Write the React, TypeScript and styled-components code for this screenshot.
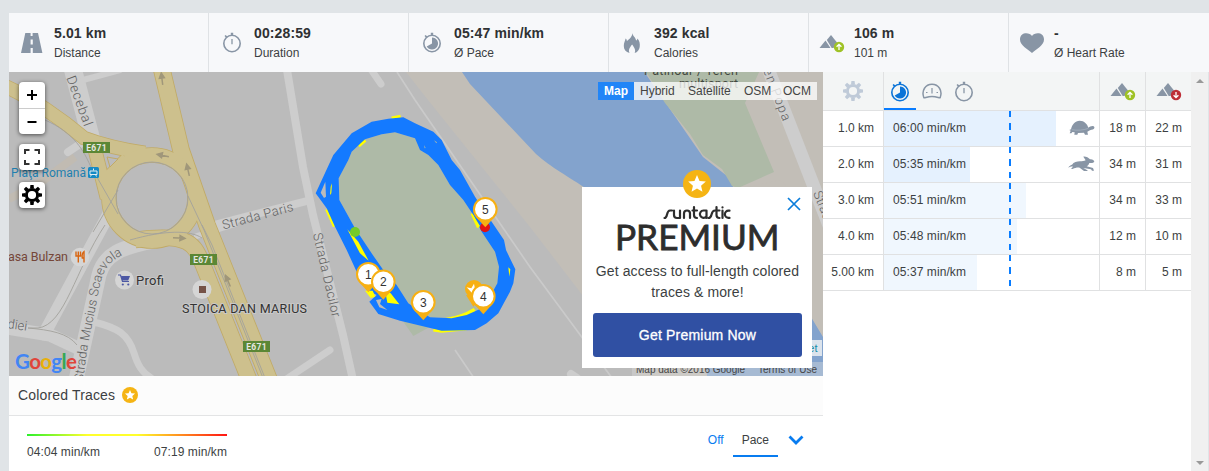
import React from "react"
import styled, { createGlobalStyle } from "styled-components"

const GlobalStyle = createGlobalStyle`
  body {
    margin: 0;
    overflow: hidden;
    background: #e0e4e7;
    color: #3c3f42;
    font-family: "Liberation Sans", Arial, sans-serif;
    font-size: 12px;
  }
  * {
    box-sizing: border-box;
  }
  svg {
    display: block;
    flex-shrink: 0;
  }
`

const Page = styled.div`
  display: flex;
  flex-direction: column;
  width: 1209px;
  height: 471px;
  padding: 13px 0 0 9px;
`
const Stats = styled.div`
  display: flex;
  height: 59px;
  background: #f7f8fa;
`
const Stat = styled.div`
  display: flex;
  width: 200px;
  border-right: 1px solid #dfe2e5;
  &:last-child {
    border-right: none;
  }
`
const StatIcon = styled.div`
  display: flex;
  align-items: center;
  justify-content: center;
  width: 45px;
`
const StatText = styled.div`
  display: flex;
  flex-direction: column;
  padding-top: 10px;
  line-height: 20px;
`
const StatValue = styled.div`
  font-size: 14px;
  font-weight: bold;
  letter-spacing: 0.12px;
  color: #2f3133;
`
const Main = styled.div`
  display: flex;
  flex: 1;
`
const Left = styled.div`
  width: 814px;
  background: #fff;
`

const MapBox = styled.div`
  position: relative;
  height: 304px;
  overflow: hidden;
`
const Controls = styled.div`
  position: absolute;
  left: 10px;
  top: 10px;
  display: flex;
  flex-direction: column;
`
const Control = styled.div<{ $gap?: number }>`
  width: 26px;
  margin-bottom: ${(p) => p.$gap || 0}px;
  border-radius: 4px;
  background: #fff;
  box-shadow: 0 1px 4px rgba(0, 0, 0, 0.6);
`
const ControlButton = styled.div`
  display: flex;
  align-items: center;
  justify-content: center;
  height: 26px;
  & + & {
    border-top: 1px solid #ccc;
  }
`
const MapTypes = styled.div`
  position: absolute;
  right: 6px;
  top: 10px;
  display: flex;
  height: 18px;
  line-height: 18px;
  background: rgba(255, 255, 255, 0.75);
`
const MapType = styled.div<{ $width: number; $active?: boolean }>`
  width: ${(p) => p.$width}px;
  padding-left: 6px;
  color: ${(p) => (p.$active ? "#fff" : "#444")};
  background: ${(p) => (p.$active ? "#2185f7" : "transparent")};
  font-weight: ${(p) => (p.$active ? "bold" : "normal")};
`
const Promo = styled.div`
  position: absolute;
  left: 573px;
  top: 115px;
  display: flex;
  flex-direction: column;
  align-items: center;
  width: 230px;
  height: 181px;
  padding: 17px 10px 0 11px;
  background: #fff;
`
const PromoStar = styled.div`
  position: absolute;
  left: 101px;
  top: -17px;
`
const Close = styled.div`
  position: absolute;
  right: 11px;
  top: 10px;
`
const PromoText = styled.div`
  height: 42px;
  margin-bottom: 10px;
  font-size: 14px;
  line-height: 21px;
  letter-spacing: 0.1px;
  text-align: center;
  white-space: nowrap;
`
const PromoButton = styled.div`
  width: 209px;
  height: 44px;
  border-radius: 3px;
  background: #3050a3;
  color: #fff;
  font-size: 14px;
  line-height: 44px;
  letter-spacing: 0.2px;
  text-align: center;
  -webkit-text-stroke: 0.3px #fff;
`
const TracesHeader = styled.div`
  display: flex;
  align-items: center;
  gap: 7px;
  height: 40px;
  padding: 0 0 1px 9px;
  border-bottom: 1px solid #e3e4e5;
  background: #fcfcfc;
  font-size: 14px;
  letter-spacing: 0.16px;
`
const Traces = styled.div`
  display: flex;
  justify-content: space-between;
  height: 55px;
  padding: 0 19px 0 18px;
`
const Legend = styled.div`
  width: 200px;
  padding-top: 18px;
`
const LegendBar = styled.div`
  height: 2px;
  background: linear-gradient(90deg, #2cf02c, #ffff2c 30%, #ffff2c 55%, #ff1414);
`
const LegendLabels = styled.div`
  display: flex;
  justify-content: space-between;
  padding-top: 9px;
  line-height: 14px;
  letter-spacing: 0.08px;
`
const TraceTabs = styled.div`
  display: flex;
  padding-top: 7px;
`
const TraceTab = styled.div<{ $active?: boolean }>`
  height: 34px;
  padding: 0 9px;
  line-height: 34px;
  color: ${(p) => (p.$active ? "inherit" : "#087cf0")};
  border-bottom: ${(p) => (p.$active ? "2px solid #087cf0" : "none")};
`
const Chevron = styled.div`
  display: flex;
  align-items: center;
  height: 34px;
  padding-left: 10px;
`

const Splits = styled.div`
  width: 368px;
  background: #fff;
`
const Row = styled.div<{ $head?: boolean }>`
  display: grid;
  grid-template-columns: 61px 216px 46px 45px;
  height: ${(p) => (p.$head ? 39 : 36)}px;
  border-bottom: 1px solid #e0e1e2;
  background: ${(p) => (p.$head ? "#f3f5f5" : "#fff")};
`
const Cell = styled.div`
  display: flex;
  align-items: center;
  justify-content: flex-end;
  padding: 0 9px 2px 0;
  border-right: 1px solid #e0e1e2;
  white-space: nowrap;
  &:last-child {
    border-right: none;
  }
`
const IconCell = styled(Cell)`
  justify-content: center;
  padding: 0;
`
const Tabs = styled.div`
  display: flex;
  border-right: 1px solid #e0e1e2;
`
const Tab = styled.div<{ $active?: boolean }>`
  display: flex;
  align-items: center;
  justify-content: center;
  width: 32px;
  padding-top: 2px;
  border-bottom: 2px solid ${(p) => (p.$active ? "#087cff" : "transparent")};
`
const PaceCell = styled.div`
  position: relative;
  display: flex;
  align-items: center;
  justify-content: space-between;
  padding: 0 4px 2px 9px;
  border-right: 1px solid #e0e1e2;
`
const PaceBar = styled.div<{ $strong?: boolean }>`
  position: absolute;
  left: 0;
  top: 0;
  bottom: 0;
  background: ${(p) => (p.$strong ? "#e5f1fe" : "#f0f7fe")};
`
const PaceText = styled.div`
  position: relative;
  letter-spacing: 0.08px;
`
const Animal = styled.div`
  position: relative;
`
const Average = styled.div`
  position: absolute;
  left: 125px;
  top: 0;
  bottom: 0;
  width: 2px;
  background: repeating-linear-gradient(#087cff 0 6.4px, transparent 6.4px 12.4px);
`
const Scrollbar = styled.div`
  display: flex;
  flex-direction: column;
  justify-content: space-between;
  align-items: center;
  width: 18px;
  padding: 6px 0 5px;
  border-right: 1px solid #e0e4e7;
  background: #f0f0f0;
`

const GREY = "#8895a5"

const RoadIcon = () => (
  <svg width="22" height="20" viewBox="0 0 22 20">
    <path d="M4.3 0H9.6V3H11.6V0H17L21.4 20H11.8V15H9.6V20H0z" fill={GREY} />
    <path d="M9.6 6.5h2.2v5H9.6z" fill="#f7f8fa" />
  </svg>
)

const Stopwatch = ({ pie, color = GREY }: { pie?: boolean; color?: string }) => (
  <svg width="20" height="21" viewBox="0 0 20 21" fill="none" stroke={color}>
    <circle cx="10" cy="11.5" r="8.2" strokeWidth="1.6" />
    <path d="M10 1V3M8.8 1.6h2.4M3.1 3.5L5 5.4" strokeWidth="1.7" />
    {pie ? (
      <path d="M10 5.4V11.5L4.7 14.6A6.1 6.1 0 1 0 10 5.4z" fill={color} stroke="none" />
    ) : (
      <path d="M10 7V12.2" strokeWidth="1.3" />
    )}
  </svg>
)

const Gauge = () => (
  <svg width="20" height="16" viewBox="0 0 20 16" fill="none" stroke={GREY} strokeWidth="1.5">
    <path d="M1.800 14.600C-.8 7.500 3.500 1.200 10 1.200s10.800 6.300 8.200 13.400c-.8.6-3-1-8.200-1s-7.400 1.600-8.200 1z" />
    <path d="M10 5V10.500M4 9.500h1.500M14.500 9.500H16" strokeWidth="1.200" />
  </svg>
)

const Flame = () => (
  <svg width="18" height="20" viewBox="0 0 18 20">
    <path
      d="M9.400 0c.2 3 3.400 4.500 3.700 7.600.8-.4 1.300-1.200 1.300-2C16.500 8 17.200 10.600 16.700 14c-.4 3-2.300 5.200-5 6 1.300-3.500-.4-5.500-2.600-8.600-2.300 3-4.200 5.200-2.500 8.600C2.800 19 .8 16.500.8 13c0-3.500 1.300-5 1.800-7.500.9.6 1.200 1.500 1.300 2.600C6.700 6 9.500 3 9.400 0z"
      fill={GREY}
    />
  </svg>
)

const Heart = () => (
  <svg width="24" height="20" viewBox="0 0 24 20">
    <path
      d="M12 2.900C14.500-1 24-1.300 24 6.500c0 6-7.500 9.500-12 13.500C7.500 16 0 12.500 0 6.500 0-1.300 9.500-1 12 2.900z"
      fill={GREY}
    />
  </svg>
)

const Mountain = ({ down }: { down?: boolean }) => (
  <svg width="26" height="20" viewBox="0 -1 26 20">
    <path d="M.5 14L6.500 6.500 11.500 14z" fill={GREY} />
    <path d="M7.800 6L12 1l6 7.500L14.500 14h-1.800z" fill={GREY} />
    <circle cx="20" cy="13" r="5.200" fill={down ? "#bd2d36" : "#9fc226"} />
    <path
      d={down ? "M20 10v5.500M17.600 13.300L20 15.700l2.400-2.400" : "M20 16v-5.500M17.600 12.700L20 10.300l2.400 2.400"}
      stroke="#fff"
      strokeWidth="1.300"
      fill="none"
    />
  </svg>
)

const Gear = ({ color, size = 20 }: { color: string; size?: number }) => (
  <svg width={size} height={size} viewBox="-10 -10 20 20">
    <circle r="5.600" fill="none" stroke={color} strokeWidth="3" />
    {[0, 45, 90, 135, 180, 225, 270, 315].map((a) => (
      <path key={a} d="M-2-6.500L-1.600-10H1.600L2-6.500z" fill={color} transform={`rotate(${a})`} />
    ))}
  </svg>
)

const Star = ({ size }: { size: number }) => (
  <svg width={size} height={size} viewBox="-10 -10 20 20">
    <circle r="10" fill="#f5b414" />
    <path
      d="M0-6.400L1.800-2.200 6.300-1.800 2.900 1.200 3.900 5.600 0 3.300-3.900 5.600-2.900 1.200-6.300-1.800-1.800-2.200z"
      fill="#fff"
    />
  </svg>
)

const Turtle = () => (
  <svg width="26" height="16" viewBox="0 0 78 48">
    <path
      d="M6 28C10 12 18 3 32 2c14 0 23 10 26 21 4-2 7-5 13-5 5 0 7 5 4 8-4 4-11 2-16 7l-4 2 2 9h-9l-3-6-18 1-2 5h-9l1-7-7-1-3 4H2l3-8-4-2z"
      fill={GREY}
    />
    <path d="M8 29C24 32 44 31 58 25" stroke="#b4c0cd" strokeWidth="1.500" fill="none" />
  </svg>
)

const Rabbit = () => (
  <svg width="27" height="16" viewBox="0 0 81 48">
    <path
      d="M0 35C5 29 8 27 12 26c5-8 15-10 24-10 7 0 12-1 17-3L46 2c8-1 15 3 20 8 7-1 12 3 13 7-3 4-9 4-15 4-2 5-4 8-8 10l19 5 3 8h-6l-3-4-23-4 12 7 1 2H48L35 35c-8-1-14 1-21 4l-5-1 6-6c-5-2-10 1-15 3z"
      fill={GREY}
    />
  </svg>
)

const ROAD = "#cdcdcd"

const grayRoads = [
  { d: "M72 66L92 142", w: 18 },
  { d: "M83 80L120 70", w: 6 },
  { d: "M68 152L83 142", w: 8 },
  { d: "M112 208L44 334", w: 13 },
  { d: "M158 240C120 247 104 255 99 275L76 380", w: 15 },
  { d: "M0 327L50 335L80 349", w: 13 },
  { d: "M94 322C118 328 128 334 134 353C138 366 142 372 151 378", w: 7 },
  { d: "M210 226L307 201", w: 8 },
  { d: "M287 70L303 167L313 215L343 335L353 380", w: 8 },
  { d: "M197 236L235 224", w: 6 },
  { d: "M370 68L381 84", w: 7 },
  { d: "M285 380L330 350", w: 7 },
  { d: "M767 66L830 228", w: 13 },
  { d: "M571 374L577 378", w: 8 },
]

const yellowRoads = [
  { d: "M0 84C30 96 65 122 84 138C105 146 125 150 145 153", w: 13 },
  { d: "M94 146L107 198", w: 13 },
  { d: "M126 158L104 180", w: 10 },
  { d: "M161 66L181 150L207 225L270 382", w: 16 },
  { d: "M135 240C190 232 195 245 203 265L250 382", w: 15 },
]

const Shield = ({ x, y }: { x: number; y: number }) => (
  <g>
    <rect x={x} y={y} width="27" height="11" fill="#5b8735" />
    <text x={x + 3.200} y={y + 8.700} fontSize="8.500" fontWeight="bold" fill="#e6e8e2" textLength="20.500">
      E671
    </text>
  </g>
)

const Arrow = ({ x, y, a }: { x: number; y: number; a: number }) => (
  <path
    d="M-6 0H5M1-2.500L6 0 1 2.500z"
    transform={`translate(${x} ${y}) rotate(${a})`}
    stroke="#a0977a"
    strokeWidth="1.500"
    fill="#a0977a"
  />
)

const Pin = ({ x, y, n }: { x: number; y: number; n: number }) => (
  <g transform={`translate(${x} ${y})`}>
    <path d="M-9 8L0 18 9 8z" fill="#f7b013" />
    <circle r="11.300" fill="#fff" stroke="#f7b013" strokeWidth="2" />
    <text y="4.200" textAnchor="middle" fontFamily="Liberation Sans" fontSize="12" fill="#333">
      {n}
    </text>
  </g>
)

const pins = [
  { n: 1, x: 368.300, y: 274.300 },
  { n: 2, x: 383.300, y: 281.700 },
  { n: 3, x: 423.300, y: 302.300 },
  { n: 4, x: 483.300, y: 296.300 },
  { n: 5, x: 485.300, y: 209.300 },
]

const TRACK_OUT =
  "M215 65L265 56 310 52 345 70 400 95 425 120 455 180 480 210 525 290 575 365 612 420 618 450 646 508 640 550 630 575 595 640 560 670 525 690 425 692 300 662 235 642 208 605 230 585 200 570 170 515 140 450 105 380 80 325 47 280 100 165 155 100z"
const TRACK_IN =
  "M285 97L345 115 360 150 385 165 415 195 450 255 490 300 520 345 545 395 585 455 597 500 592 550 570 590 545 625 500 645 455 655 390 652 355 630 325 610 290 555 250 510 215 460 165 385 118 300 116 235 145 180 155 155 195 118 245 103z"

const MapCanvas = () => (
  <svg width="814" height="304" viewBox="9 72 814 304" fontFamily="Roboto, sans-serif">
    <rect x="9" y="72" width="814" height="304" fill="#bbb" />
    <path d="M406 72L428 100 530 227 580 292 640 376H823V72z" fill="#c2beb7" />
    <path d="M462 72L470 84 536 154C552 168 566 175 590 191L700 280 707 376H823V337L735 190 727 176 703 157 643 70z" fill="#83a3cd" />
    <path d="M735 190L823 336V220L780 180z" fill="#c2beb7" />
    <path d="M645 70L665 103 690 134 703 155 722 169 732 186 738 188 774 172 745 103 760 70z" fill="#aebaa7" />

    <path d="M9 199L40 183 75 157" stroke="#c1bbb2" strokeWidth="8" fill="none" />
    {grayRoads.map((r) => (
      <path key={r.d} d={r.d} stroke={ROAD} strokeWidth={r.w} fill="none" strokeLinecap="round" />
    ))}
    <path d="M397 72L415 100 530 267 612 378M455 350L474 378" stroke="#cacaca" strokeWidth="1.700" fill="none" />

    {/* casing first, then the fill, so that the junctions merge */}
    <g fill="none" stroke="#c1aa66">
      {yellowRoads.map((r) => (
        <path key={r.d} d={r.d} strokeWidth={r.w + 1.600} />
      ))}
      <circle cx="152" cy="198" r="43" strokeWidth="15.500" />
    </g>
    <g fill="none" stroke="#cdc08d">
      {yellowRoads.map((r) => (
        <path key={r.d} d={r.d} strokeWidth={r.w} />
      ))}
      <circle cx="152" cy="198" r="43" strokeWidth="14" />
    </g>
    <path d="M107 157L118 159 110 167z" fill="#bbb" stroke="#c1aa66" />
    <g fill="none" stroke="#a3a29c" strokeWidth=".9">
      <circle cx="152" cy="198" r="36" />
      <path d="M45 120C75 133 84 152 90 165L118 214M188 196L204 230 263 378M202 225L212 245 265 378M118 190L93 232M105 225C75 270 65 325 38 328H28C50 330 68 333 77 345M130 240C165 230 190 230 202 238" />
    </g>
    <Arrow x={162} y={79} a={-97} />
    <Arrow x={163} y={155.500} a={-168} />
    <Arrow x={188} y={170} a={-103} />
    <Arrow x={179} y={238} a={3} />
    <Arrow x={228} y={281} a={-113} />

    <g fill="#606060" fontWeight="300">
      <text transform="translate(62 66) rotate(70)" fontSize="13.500" textLength="65">
        n Decebal
      </text>
      <path id="scaevola" d="M83 382L87 350 97 300C103 270 104 260 138 249" fill="none" />
      <text fontSize="13">
        <textPath href="#scaevola" textLength="138">
          Strada Mucius Scaevola
        </textPath>
      </text>
      <text transform="translate(7 328) rotate(8)" fontSize="13">
        diei
      </text>
      <text transform="translate(223.500 229.500) rotate(-15)" fontSize="13" textLength="73">
        Strada Paris
      </text>
      <text transform="translate(313 234) rotate(77)" fontSize="13" textLength="86">
        Strada Dacilor
      </text>
      <text transform="translate(760 62) rotate(69)" fontSize="13" textLength="64">
        den Popa
      </text>
      <text transform="translate(813 193) rotate(68)" fontSize="13">
        Strada
      </text>
    </g>
    <g fill="#42483f" fontSize="12.500">
      <text x="644" y="74.500" textLength="94">
        Patinoar / Teren
      </text>
      <text x="679" y="87.500" textLength="59">
        multisport
      </text>
    </g>
    <Shield x={83} y={142} />
    <Shield x={190} y={254} />
    <Shield x={243} y={341} />

    <text x="11" y="176.500" fontSize="12" fill="#1f80b0" textLength="75">
      Piaţa Romană
    </text>
    <rect x="88" y="167" width="11" height="11" rx="1.500" fill="#168ac4" />
    <path d="M93.500 168.500v2M90 171h7v3.500h-7zM91.500 174.500l-1 2M95.500 174.500l1 2" stroke="#e4edf1" fill="none" />

    <text x="8" y="260.500" fontSize="12.500" fill="#754638" textLength="60">
      asa Bulzan
    </text>
    <g fill="#d5d5d5">
      <circle cx="80" cy="257" r="9.300" />
      <circle cx="124.500" cy="280" r="9.500" />
      <circle cx="202" cy="289.500" r="9.500" />
    </g>
    <path d="M76 251.500v4.500h4.500v-4.500M78.300 251.500V262.500M84 262.500V251.500C81.500 253 82 256 82.300 258H84" stroke="#d96510" strokeWidth="1.400" fill="none" />
    <path d="M118 275h2.500l2 6.500h6.500" stroke="#4d58a4" strokeWidth="1.200" fill="none" />
    <path d="M121 276h9l-1.800 4.500h-6z" fill="#4d58a4" />
    <circle cx="122.800" cy="284.500" r="1.100" fill="#4d58a4" />
    <circle cx="128.300" cy="284.500" r="1.100" fill="#4d58a4" />
    <rect x="199" y="286" width="7" height="7" fill="#755248" />
    <g fill="#333" stroke="#c8c8c8" strokeWidth="2" paintOrder="stroke" fontSize="12.500">
      <text x="136" y="284.500" fontSize="13" textLength="28">
        Profi
      </text>
      <text x="182" y="312.500" textLength="125">
        STOICA DAN MARIUS
      </text>
    </g>

    {/* GPS trace, drawn at three units per pixel */}
    <g transform="translate(300 100) scale(.33333)">
      <path d="M310 665L340 708 400 675z" fill="#aebaa7" />
      <path d={TRACK_IN} fill="#aebaa7" />
      <g stroke="#ff0" strokeWidth="9" fill="none">
        <path d="M275 54L302 49M176 138L196 121M80 328L103 380M516 340L535 382M400 690L425 694 500 686" />
        <path d="M440 660C475 656 500 645 525 630" strokeWidth="14" />
      </g>
      <path d={TRACK_OUT + TRACK_IN} fill="#147aff" fillRule="evenodd" />
      <path d="M62 278L76 245 78 290 72 294z" fill="#bbb" />
      <path d="M92 260L96 250 94 280 90 285zM142 388L175 425 206 482 180 460zM255 570L272 580 298 613 262 608zM195 572L218 572 226 590 212 594zM625 502L631 508 628 530zM516 340L540 378 534 384z" fill="#ff0" />
      <path d="M228 600L245 597 240 612 262 630 238 622z" fill="#bbb" />
      <path d="M402 121l9 6-2 3zM372 135l5 9-3 1z" fill="#aebaa7" />
      <circle cx="165" cy="396" r="15" fill="#74cb2a" />
      <circle cx="555" cy="382" r="15" fill="#e31414" />
      <circle cx="522" cy="567" r="27" fill="#f7b013" />
      <path d="M498 585L520 620 545 590z" fill="#f7b013" />
      <path d="M500 562l14 3 8-14 3 15 12 0-12 12-6 4z" fill="#fff" />
    </g>
    {pins.map((p) => (
      <Pin key={p.n} {...p} />
    ))}

    <text x="15" y="368.500" fontFamily="Lato, sans-serif" fontSize="20.500" fontWeight="bold" textLength="62">
      <tspan fill="#4285f4">G</tspan>
      <tspan fill="#e0443a">o</tspan>
      <tspan fill="#e8b00a">o</tspan>
      <tspan fill="#4285f4">g</tspan>
      <tspan fill="#34a853">l</tspan>
      <tspan fill="#e0443a">e</tspan>
    </text>
    <rect x="632" y="362" width="191" height="14" fill="#ddd" opacity=".4" />
    <g fontFamily="Liberation Sans" fill="#444" fontSize="10">
      <text x="636" y="372.500" textLength="109">
        Map data ©2016 Google
      </text>
      <text x="758" y="372.500" textLength="59">
        Terms of Use
      </text>
    </g>
    <rect x="800" y="340" width="22" height="16" fill="#dbe3ec" />
    <text x="817.500" y="352" textAnchor="end" fontFamily="Liberation Sans" fontSize="11" fill="#178ba8">
      et
    </text>
  </svg>
)

const mapTypes = [
  { name: "Map", width: 36 },
  { name: "Hybrid", width: 48 },
  { name: "Satellite", width: 56 },
  { name: "OSM", width: 39 },
  { name: "OCM", width: 40 },
]

const PremiumLogo = () => (
  <svg width="170" height="57" viewBox="612 204 170 57" fill="#2d2d2d">
    <g
      transform="translate(-1 0)"
      fill="none"
      stroke="#2d2d2d"
      strokeWidth="2.200"
      strokeLinecap="round"
      strokeLinejoin="round"
    >
      <path d="M664.500 218C668 218 666 210.500 670 210.500h2M674 210.500v4.500q0 3 3 3h3v-7.500M684 218v-4.500q0-3 3-3t3 3V218M694 207v8q0 3 3 3M692.500 210.500h4.500" />
      <path d="M706.500 210.500h-3a3.700 3.700 0 1 0 3 6V210.500V218M708.500 218C713 218 710 210.500 715 210.500M716.500 207v8q0 3 3 3M715 210.500h4.500M722.500 210.500V218M722.500 207.300v.1M729.500 210.700h-1a3.600 3.600 0 0 0 0 7.200h1" />
    </g>
    <text
      x="614"
      y="249.500"
      fontFamily="Lato, sans-serif"
      fontSize="34.500"
      textLength="164.500"
      lengthAdjust="spacingAndGlyphs"
      stroke="#2d2d2d"
      strokeWidth=".8"
    >
      PREMIUM
    </text>
  </svg>
)

const RunMap = () => (
  <MapBox>
    <MapCanvas />
    <Controls>
      <Control $gap={10}>
        <ControlButton>
          <svg width="12" height="12">
            <path d="M6 1V11M1 6H11" stroke="#000" strokeWidth="2" />
          </svg>
        </ControlButton>
        <ControlButton>
          <svg width="12" height="12">
            <path d="M1.500 6H10.500" stroke="#000" strokeWidth="2" />
          </svg>
        </ControlButton>
      </Control>
      <Control $gap={12}>
        <ControlButton>
          <svg width="16" height="16" fill="none" stroke="#333" strokeWidth="2">
            <path d="M1 5V1H5.500M10.500 1H15V5M15 11V15H10.500M5.500 15H1V11" />
          </svg>
        </ControlButton>
      </Control>
      <Control>
        <ControlButton>
          <Gear color="#000" />
        </ControlButton>
      </Control>
    </Controls>
    <MapTypes>
      {mapTypes.map((t, i) => (
        <MapType key={t.name} $width={t.width} $active={i === 0}>
          {t.name}
        </MapType>
      ))}
    </MapTypes>
    <Promo>
      <PromoStar>
        <Star size={28} />
      </PromoStar>
      <Close>
        <svg width="14" height="14">
          <path d="M1 1L13 13M13 1L1 13" stroke="#0a7ddb" strokeWidth="1.700" />
        </svg>
      </Close>
      <PremiumLogo />
      <PromoText>
        Get access to full-length colored
        <br />
        traces &amp; more!
      </PromoText>
      <PromoButton>Get Premium Now</PromoButton>
    </Promo>
  </MapBox>
)

const stats = [
  { icon: <RoadIcon />, value: "5.01 km", label: "Distance" },
  { icon: <Stopwatch />, value: "00:28:59", label: "Duration" },
  { icon: <Stopwatch pie />, value: "05:47 min/km", label: "Ø Pace" },
  { icon: <Flame />, value: "392 kcal", label: "Calories" },
  { icon: <Mountain />, value: "106 m", label: "101 m" },
  { icon: <Heart />, value: "-", label: "Ø Heart Rate" },
]

const splits = [
  { km: "1.0 km", pace: "06:00 min/km", bar: 172, up: "18 m", down: "22 m", icon: <Turtle /> },
  { km: "2.0 km", pace: "05:35 min/km", bar: 86, up: "34 m", down: "31 m", icon: <Rabbit /> },
  { km: "3.0 km", pace: "05:51 min/km", bar: 142, up: "34 m", down: "33 m" },
  { km: "4.0 km", pace: "05:48 min/km", bar: 133, up: "12 m", down: "10 m" },
  { km: "5.00 km", pace: "05:37 min/km", bar: 93, up: "8 m", down: "5 m" },
]

const SplitTable = () => (
  <Splits>
    <Row $head>
      <IconCell>
        <Gear color="#bfcad8" />
      </IconCell>
      <Tabs>
        <Tab $active>
          <Stopwatch pie color="#0b74d8" />
        </Tab>
        <Tab>
          <Gauge />
        </Tab>
        <Tab>
          <Stopwatch />
        </Tab>
      </Tabs>
      <IconCell>
        <Mountain />
      </IconCell>
      <IconCell>
        <Mountain down />
      </IconCell>
    </Row>
    {splits.map((s) => (
      <Row key={s.km}>
        <Cell>{s.km}</Cell>
        <PaceCell>
          <PaceBar $strong={!!s.icon} style={{ width: s.bar }} />
          <Average />
          <PaceText>{s.pace}</PaceText>
          <Animal>{s.icon}</Animal>
        </PaceCell>
        <Cell>{s.up}</Cell>
        <Cell>{s.down}</Cell>
      </Row>
    ))}
  </Splits>
)

const App = () => (
  <Page>
    <GlobalStyle />
    <Stats>
      {stats.map((s) => (
        <Stat key={s.label}>
          <StatIcon>{s.icon}</StatIcon>
          <StatText>
            <StatValue>{s.value}</StatValue>
            <div>{s.label}</div>
          </StatText>
        </Stat>
      ))}
    </Stats>
    <Main>
      <Left>
        <RunMap />
        <TracesHeader>
          Colored Traces
          <Star size={16} />
        </TracesHeader>
        <Traces>
          <Legend>
            <LegendBar />
            <LegendLabels>
              <span>04:04 min/km</span>
              <span>07:19 min/km</span>
            </LegendLabels>
          </Legend>
          <TraceTabs>
            <TraceTab>Off</TraceTab>
            <TraceTab $active>Pace</TraceTab>
            <Chevron>
              <svg width="16" height="10">
                <path d="M1.500 1.500L8 8 14.500 1.500" fill="none" stroke="#087cf0" strokeWidth="2.800" />
              </svg>
            </Chevron>
          </TraceTabs>
        </Traces>
      </Left>
      <SplitTable />
      <Scrollbar>
        <svg width="8" height="5">
          <path d="M0 5L4 1 8 5z" fill="#999" />
        </svg>
        <svg width="8" height="5">
          <path d="M0 0L4 4 8 0z" fill="#999" />
        </svg>
      </Scrollbar>
    </Main>
  </Page>
)

export default App
